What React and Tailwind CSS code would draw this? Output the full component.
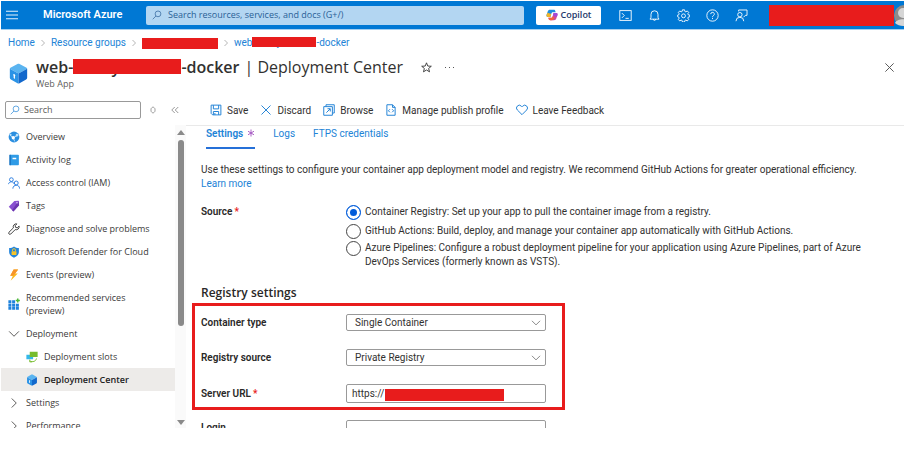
import React from "react";

function Svg({ size = 12, className = "", children, ...rest }) {
  return (
    <svg
      width={size}
      height={size}
      viewBox="0 0 16 16"
      fill="none"
      stroke="currentColor"
      strokeWidth="1.1"
      className={`shrink-0 ${className}`}
      aria-hidden="true"
      {...rest}
    >
      {children}
    </svg>
  );
}

const SearchIcon = (p) => (
  <Svg {...p}>
    <circle cx="9.6" cy="6.2" r="4.6" />
    <path d="M6.3 9.6 1.2 14.8" />
  </Svg>
);

const ChevronRight = (p) => (
  <Svg {...p}>
    <path d="m5 2 6 6-6 6" />
  </Svg>
);

const ChevronDown = (p) => (
  <Svg {...p}>
    <path d="m1.5 4.5 6.5 6.5 6.5-6.5" />
  </Svg>
);

function CubeIcon({ size }) {
  return (
    <Svg size={size} stroke="none">
      <path d="M8 .6c.3 0 .5.1.8.2l5 2.700c.5.3.8.6.8.8L8 8 1.400 4.300c0-.2.3-.5.800-.8l5-2.700c.3-.1.500-.2.800-.2z" fill="#5ab4f0" />
      <path d="M1.400 4.300 8 8v7.600c-.3 0-.5-.1-.8-.2l-5-2.900c-.5-.3-.8-.7-.8-1.200z" fill="#2b93e6" />
      <path d="M14.600 4.300 8 8v7.600c.3 0 .5-.1.8-.2l5-2.900c.5-.3.8-.7.8-1.200z" fill="#1268cc" />
      <path d="M4.600 8.400c.9.400 1.300 1.300.7 1.900v1.800l-1-.6V9.800c-.6-.7-.3-1.500.3-1.400z" fill="#fff" />
    </Svg>
  );
}

function CopilotLogo() {
  return (
    <Svg size={12} stroke="none">
      <path d="M5.3 1h5.2c1 0 1.6.6 1.9 1.6l.5 1.6H9.2c-1 0-1.6.6-1.9 1.6L5.9 10.600H2.300C.9 10.600.3 9.400.7 8L2.300 3.200C2.800 1.700 3.700 1 5.300 1z" fill="#1f8fe0" />
      <path d="M.7 8c-.4 1.400.2 2.600 1.600 2.600h3.600l1.100-3.800L2 5z" fill="#f0b429" />
      <path d="M10.700 15H5.500c-1 0-1.600-.6-1.900-1.600l-.5-1.600h3.700c1 0 1.600-.6 1.900-1.600l1.400-4.800h3.600c1.400 0 2 1.200 1.600 2.600l-1.600 4.800c-.5 1.500-1.400 2.200-3 2.200z" fill="#d1499b" />
      <path d="M10.100 5.400h3.600c1.400 0 2 1.200 1.600 2.600l-.7 2.200-5.500-1.400z" fill="#a04bd8" />
      <path d="M3.100 11.800h3.700c1 0 1.600-.6 1.900-1.600l.3-.9 2.300 3.400-3 2.300h-2.800c-1 0-1.600-.6-1.900-1.600z" fill="#f2653a" />
    </Svg>
  );
}

const headerIcons = [
  {
    label: "Cloud Shell",
    art: (
      <>
        <rect x="1" y="2" width="14" height="12" />
        <path d="m3.500 5 3 3-3 3M8 11.500h4" />
      </>
    ),
  },
  { label: "Notifications", art: <path d="M2.500 12.500h11l-1.200-2.200V6.500a4.300 4.300 0 0 0-8.600 0v3.800zM6.500 12.500a1.500 1.500 0 0 0 3 0" /> },
  {
    label: "Portal settings",
    art: (
      <>
        <path d="M6.700 1h2.600l.4 2 1.200.5 1.700-1.100 1.800 1.800-1.100 1.700.5 1.200 1.900.4v2l-1.900.5-.5 1.200 1.100 1.700-1.800 1.800-1.700-1.100-1.200.5-.4 1.900H6.700l-.4-1.900-1.200-.5-1.700 1.100-1.800-1.800 1.100-1.700-.5-1.200L.8 9.500v-2l1.400-.4.5-1.200-1.100-1.700 1.800-1.800 1.700 1.100L6.300 3z" />
        <circle cx="8" cy="8.400" r="2.400" />
      </>
    ),
  },
  {
    label: "Help",
    art: (
      <>
        <circle cx="8" cy="8" r="7" />
        <path d="M5.800 6.300a2.200 2.200 0 1 1 3.300 1.900c-.8.500-1.100.9-1.100 1.800M8 11v1.400" />
      </>
    ),
  },
  {
    label: "Feedback",
    art: (
      <>
        <circle cx="6" cy="7" r="2.700" />
        <path d="M1.200 15a4.800 4.800 0 0 1 9.600 0M4.500 3V1.200h10.300v6.600h-2l-2.300 2.300" />
      </>
    ),
  },
];

const commands = [
  {
    label: "Save",
    art: (
      <>
        <path d="M1.500 1.500h13v13H3.500l-2-2z" />
        <path d="M4.500 1.500v5h7v-5M4.500 14.500v-4.500h7v4.500M6.500 12v2.500" />
      </>
    ),
  },
  { label: "Discard", art: <path d="m2 2 12 12m0-12-12 12" /> },
  {
    label: "Browse",
    art: (
      <>
        <path d="M4 3.500V1h11v11h-2.500M1 3.500h11.500V15H1z" />
        <path d="m4.500 11.500 5-5M6 6.300h3.700V10" />
      </>
    ),
  },
  {
    label: "Manage publish profile",
    art: (
      <>
        <path d="M2.500 1h7.500l3.500 3.500V15h-11zM10 1v3.500h3.500" />
        <path d="m6.500 7-2 2 2 2m3-4 2 2-2 2" />
      </>
    ),
  },
  { label: "Leave Feedback", art: <path d="M8 14.200 1.800 8A3.700 3.700 0 0 1 7 2.700l1 1 1-1A3.700 3.700 0 0 1 14.200 8z" /> },
];

const menu = [
  {
    label: "Overview",
    art: (
      <>
        <circle cx="8" cy="8" r="7.200" fill="#2b8fe0" stroke="none" />
        <path d="M2.500 5.500 7 9l6.500-3.500M7 9l2 5" stroke="#d5ecfb" />
        <circle cx="7" cy="9" r="2.200" fill="#fff" stroke="none" />
        <circle cx="12" cy="5.500" r="1.700" fill="#bfe3fa" stroke="none" />
        <circle cx="3.500" cy="5" r="1.300" fill="#bfe3fa" stroke="none" />
      </>
    ),
  },
  {
    label: "Activity log",
    art: (
      <>
        <rect x="2" y="1" width="12.500" height="14" rx="1" fill="#2f9be6" stroke="none" />
        <path d="M2 1h1.500v14H2z" fill="#1267b4" stroke="none" />
        <path d="M6 6h5" stroke="#fff" strokeWidth="2" />
      </>
    ),
  },
  {
    label: "Access control (IAM)",
    art: (
      <g stroke="#2f7fe0" strokeWidth="1.300">
        <circle cx="4.500" cy="3.500" r="2.500" />
        <path d="M.7 9.500C1 6 7 5 8 9" />
        <circle cx="11" cy="8" r="2.600" />
        <path d="M6.500 15.500c0-6 9-6 9 0" />
      </g>
    ),
  },
  {
    label: "Tags",
    art: (
      <>
        <path d="M8.500 1.200 14 1l.8 6-7.600 8.200L1 9z" fill="#8850d0" stroke="none" />
        <path d="m14 1 .8 6-7.600 8.200-1.700-1.700z" fill="#6a35ae" stroke="none" />
        <circle cx="12" cy="3.600" r="1" fill="#e9dcfa" stroke="none" />
      </>
    ),
  },
  {
    label: "Diagnose and solve problems",
    art: <path stroke="#333" strokeWidth="1.200" d="M11.800 1.200a4 4 0 0 0-4.600 5.300L1.300 12.300a1.700 1.700 0 0 0 2.400 2.400l5.900-5.900a4 4 0 0 0 5.200-4.700l-2.500 2.300-2.200-.6-.5-2.200z" />,
  },
  {
    label: "Microsoft Defender for Cloud",
    art: (
      <>
        <path d="M8 .5c2 1.500 4 1.900 6.500 2V8c0 4-3.500 6.200-6.500 7.500C5 14.200 1.500 12 1.500 8V2.500C4 2.400 6 2 8 .5z" fill="#2385dc" stroke="none" />
        <rect x="4.700" y="7" width="6.600" height="5" rx=".6" fill="#f6c42c" stroke="none" />
        <path d="M6 7V5.500a2 2 0 0 1 4 0V7" stroke="#f6c42c" strokeWidth="1.300" />
      </>
    ),
  },
  {
    label: "Events (preview)",
    art: (
      <>
        <path d="M7.500.5h6L9.500 6H13L3.500 15.500 6.500 9H3z" fill="#fbb81b" stroke="none" />
        <path d="M7.500.5h6L9.500 6 6.500 9H3z" fill="#f7932a" stroke="none" />
      </>
    ),
  },
  {
    label: "Recommended services (preview)",
    tall: true,
    art: (
      <>
        <path d="M.5 3h4v4h-4zM5.500 3h4v4h-4zM.5 7.600h4v3.600h-4zM5.500 7.600h4v3.600h-4zM10.500 7.600h4v3.600h-4zM.5 11.800h4v3.700h-4zM5.500 11.800h4v3.700h-4zM10.500 11.800h4v3.700h-4z" fill="#1f82dc" stroke="none" />
        <path d="M13 .5v5.500M10.300 3.200h5.500" stroke="#4fb83a" strokeWidth="2" />
      </>
    ),
  },
];

function MenuLink({ label, art, tall }) {
  return (
    <li>
      <a href="#" className={`flex items-center gap-[6px] pl-[8px] ${tall ? "h-[36px] pr-[44px]" : "h-[23px]"}`}>
        <Svg>{art}</Svg>
        <span className={tall ? "leading-[13px]" : "whitespace-nowrap"}>{label}</span>
      </a>
    </li>
  );
}

function MenuGroup({ label, open }) {
  return (
    <button type="button" aria-expanded={!!open} className="flex h-[23px] w-full items-center gap-[6px] pl-[8px]">
      {open ? <ChevronDown size={12} /> : <ChevronRight size={12} />}
      <span>{label}</span>
    </button>
  );
}

function Sidebar() {
  return (
    <aside className="flex min-h-0 w-[186px] shrink-0 font-['Open_Sans','Noto_Sans',sans-serif]">
      <nav aria-label="Resource menu" className="min-w-0 flex-1 overflow-hidden text-[9px] text-[#3b3a39]">
        <ul>
          {menu.map((m) => (
            <MenuLink key={m.label} {...m} />
          ))}
          <li>
            <MenuGroup label="Deployment" open />
            <ul>
              <li>
                <a href="#" className="flex h-[23px] items-center gap-[6px] pl-[26px]">
                  <Svg>
                    <path d="M.5 5h9v6h-9z" fill="#35b8ea" stroke="none" />
                    <path d="M5 1h10.500v7H5z" fill="#76bc2d" stroke="none" />
                    <path d="M14 10c-1 4-5 5-8.500 3.500M5 11.500v3h3" stroke="#76bc2d" strokeWidth="1.300" />
                  </Svg>
                  <span>Deployment slots</span>
                </a>
              </li>
              <li>
                <a href="#" aria-current="page" className="ml-px flex h-[23px] items-center gap-[6px] bg-[#edebe9] pl-[25px] font-semibold text-[#222]">
                  <CubeIcon size={12} />
                  <span>Deployment Center</span>
                </a>
              </li>
            </ul>
          </li>
          <li>
            <MenuGroup label="Settings" />
          </li>
          <li>
            <MenuGroup label="Performance" />
          </li>
        </ul>
      </nav>
      <div className="flex w-[11px] flex-col items-center bg-[#fafafa] pt-[5px] pb-[3px]" aria-hidden="true">
        <div className="border-x-4 border-b-[5px] border-x-transparent border-b-[#8a8a8a]" />
        <div className="mt-[5px] min-h-0 w-[6px] flex-1 rounded-full bg-[#8a8a8a]" />
        <div className="mt-[94px] border-x-4 border-t-[5px] border-x-transparent border-t-[#8a8a8a]" />
      </div>
    </aside>
  );
}

function Header() {
  return (
    <header className="ml-px flex h-[29px] items-center overflow-hidden border-b border-[#a5cff0] bg-[#0078d4] text-white">
      <button type="button" aria-label="Show portal menu" className="ml-[5px]">
        <Svg size={12}>
          <path d="M0 3h16M0 8h16M0 13h16" strokeWidth="1.200" />
        </Svg>
      </button>
      <a href="#" className="ml-[25px] w-[103px] text-[11px] font-semibold whitespace-nowrap">Microsoft Azure</a>
      <label className="flex h-[19px] min-w-0 flex-1 items-center gap-[6px] rounded-[2px] bg-[#b3d6f2] px-[6px] text-[#2a5f96]">
        <SearchIcon size={10} />
        <input
          type="search"
          aria-label="Search resources, services, and docs"
          placeholder="Search resources, services, and docs (G+/)"
          className="min-w-0 flex-1 bg-transparent font-['Open_Sans','Noto_Sans',sans-serif] text-[9px] outline-none placeholder:text-[#2a5f96]"
        />
      </label>
      <button type="button" className="ml-[12px] flex h-[19px] w-[65px] items-center justify-center gap-[3px] rounded-[2px] bg-white font-['Open_Sans','Noto_Sans',sans-serif] text-[9px] font-semibold text-[#24386a]">
        <CopilotLogo />
        Copilot
      </button>
      <div className="ml-[18px] flex gap-[16px]">
        {headerIcons.map((i) => (
          <button key={i.label} type="button" aria-label={i.label}>
            <Svg size={13}>{i.art}</Svg>
          </button>
        ))}
      </div>
      <span className="ml-[21px] h-[21px] w-[125px] shrink-0 bg-[#e81c1c]" />
      <span className="w-[10px] shrink-0 overflow-hidden">
        <svg width="21" height="21" viewBox="0 0 21 21" aria-hidden="true">
          <circle cx="10.500" cy="10.500" r="10.500" fill="#8c8c8c" />
          <circle cx="9" cy="8" r="5" fill="#d6d6d6" />
          <path d="M1 18c2-5 14-5 17 0-4 4-13 4-17 0z" fill="#d6d6d6" />
        </svg>
      </span>
    </header>
  );
}

function Breadcrumb() {
  return (
    <nav aria-label="Breadcrumb" className="flex h-[26px] items-center pl-[8px] text-[10px] leading-[14px] whitespace-nowrap text-[#2283d6]">
      <a href="#">Home</a>
      <ChevronRight size={8} className="mx-[4px] text-[#777]" />
      <a href="#">Resource groups</a>
      <ChevronRight size={8} className="mx-[4px] text-[#777]" />
      <span className="h-[11px] w-[76px] bg-[#e81c1c]" />
      <ChevronRight size={8} className="mx-[4px] text-[#777]" />
      <a href="#" className="flex items-center">
        web
        <span className="relative w-[64px] pl-[24px]">
          y
          <span className="absolute inset-x-0 top-px bottom-[3px] bg-[#e81c1c]" />
        </span>
        -docker
      </a>
    </nav>
  );
}

function TitleBar() {
  return (
    <div className="flex h-[34px] items-center pr-[9px] pl-[8px] font-['Open_Sans','Noto_Sans',sans-serif]">
      <CubeIcon size={21} />
      <div className="ml-[7px]">
        <h1 className="flex items-center text-[16px] leading-[22px] whitespace-nowrap text-[#323130]">
          <span className="font-semibold">web-</span>
          <span className="relative w-[108px] pl-[38px] font-semibold">
            y
            <span className="absolute inset-x-0 top-[3px] bottom-[4px] bg-[#e81c1c]" />
          </span>
          <span className="font-semibold">-docker</span>
          <span className="ml-[5px]">| Deployment Center</span>
        </h1>
        <p className="text-[9px] leading-[12px] text-[#605e5c]">Web App</p>
      </div>
      <button type="button" aria-label="Add to favorites" className="mb-[12px] ml-[18px] text-[#333]">
        <Svg size={11} strokeWidth="1.300">
          <path d="m8 1.200 1.900 4.700 5.100.3-3.900 3.200 1.300 4.900L8 11.600l-4.400 2.700 1.300-4.900L1 6.200l5.100-.3z" />
        </Svg>
      </button>
      <button type="button" aria-label="More" className="mb-[12px] ml-[13px] text-[#555]">
        <svg width="9" height="3" viewBox="0 0 9 3" fill="currentColor" aria-hidden="true">
          <path d="M0 1h1v1H0zM4 1h1v1H4zM8 1h1v1H8z" />
        </svg>
      </button>
      <button type="button" aria-label="Close" className="mb-[12px] ml-auto text-[#555]">
        <Svg size={11} strokeWidth="1.400">
          <path d="m2 2 12 12m0-12-12 12" />
        </Svg>
      </button>
    </div>
  );
}

function CommandRow() {
  return (
    <div className="flex h-[35px] items-center pt-[5px] pl-[5px]">
      <label className="flex h-[18px] w-[136px] items-center gap-[4px] rounded-[2px] border border-[#999] px-[4px]">
        <SearchIcon size={10} className="text-[#2283d6]" />
        <input type="search" aria-label="Search menu" placeholder="Search" className="min-w-0 flex-1 bg-transparent font-['Open_Sans','Noto_Sans',sans-serif] text-[9px] outline-none placeholder:text-[#605e5c]" />
      </label>
      <button type="button" aria-label="Expand all" className="ml-[8px] text-[#888]">
        <Svg size={8} strokeWidth="1.600">
          <path d="m4 5.500 4-4 4 4M4 10.500l4 4 4-4M4 5.500v5M12 5.500v5" />
        </Svg>
      </button>
      <button type="button" aria-label="Collapse menu" className="ml-[14px] text-[#777]">
        <Svg size={8} strokeWidth="1.500">
          <path d="M7.500 2 1.500 8l6 6M14.500 2l-6 6 6 6" />
        </Svg>
      </button>
      <div className="ml-[31px] flex items-center gap-[12px] text-[10px] whitespace-nowrap text-[#323130]">
        {commands.map((c) => (
          <button key={c.label} type="button" className="flex items-center gap-[5px]">
            <Svg size={12} className="text-[#2283d6]" strokeWidth="1.300">{c.art}</Svg>
            {c.label}
          </button>
        ))}
      </div>
    </div>
  );
}

function Tabs() {
  return (
    <div role="tablist" className="flex items-start gap-[18px] pl-[5px] text-[10px] text-[#2283d6]">
      <button type="button" role="tab" aria-selected="true" className="flex h-[23px] items-start gap-[4px] border-b-2 border-[#2570d8] font-semibold">
        Settings
        <Svg size={8} className="mt-[3px] text-[#a04fc0]" strokeWidth="1.800">
          <path d="M8 1v14M2 4.500l12 7M14 4.500l-12 7" />
        </Svg>
      </button>
      <button type="button" role="tab" aria-selected="false">Logs</button>
      <button type="button" role="tab" aria-selected="false">FTPS credentials</button>
    </div>
  );
}

const sources = [
  { id: "registry", text: "Container Registry: Set up your app to pull the container image from a registry.", row: "h-[19px]" },
  { id: "github", text: "GitHub Actions: Build, deploy, and manage your container app automatically with GitHub Actions.", row: "h-[17px]" },
  {
    id: "pipelines",
    text: "Azure Pipelines: Configure a robust deployment pipeline for your application using Azure Pipelines, part of Azure DevOps Services (formerly known as VSTS).",
    row: "",
  },
];

function Required() {
  return <span className="ml-[2px] text-[#e81c1c]">*</span>;
}

const LABEL = "w-[145px] shrink-0 font-semibold text-[#292827]";

function SelectField({ id, label, value }) {
  return (
    <div className="flex h-[17px] items-center">
      <label htmlFor={id} className={LABEL}>{label}</label>
      <div className="relative">
        <select id={id} defaultValue={value} className="block h-[17px] w-[200px] appearance-none rounded-[2px] border border-[#999] bg-white pl-[8px] text-[10px] text-[#323130]">
          <option>{value}</option>
        </select>
        <ChevronDown size={10} className="pointer-events-none absolute top-[4px] right-[5px] text-[#555]" />
      </div>
    </div>
  );
}

function Content() {
  return (
    <main className="min-w-0 flex-1 overflow-hidden border-t border-[#e9e9e9] pr-[30px] pl-[15px] text-[10px] text-[#323130]">
      <Tabs />
      <p className="mt-[14px] leading-[14px]">
        Use these settings to configure your container app deployment model and registry. We recommend GitHub Actions for greater operational efficiency.{" "}
        <a href="#" className="inline-block text-[#2283d6]">Learn more</a>
      </p>
      <fieldset className="mt-[13px] flex">
        <legend className={`float-left ${LABEL}`}>
          Source
          <Required />
        </legend>
        <div className="min-w-0 flex-1 pt-px">
          {sources.map((s, i) => (
            <label key={s.id} className={`flex items-start gap-[4px] leading-[14px] ${s.row}`}>
              <input
                type="radio"
                name="source"
                defaultChecked={i === 0}
                className="size-[15px] shrink-0 appearance-none rounded-full border border-[#444] bg-white checked:border-[#015cda] checked:bg-[#015cda] checked:shadow-[inset_0_0_0_3px_white]"
              />
              <span>{s.text}</span>
            </label>
          ))}
        </div>
      </fieldset>
      <h2 className="mt-[16px] font-['Open_Sans','Noto_Sans',sans-serif] text-[12px] leading-[16px] font-semibold text-[#292827]">Registry settings</h2>
      <div className="mt-[2px] -ml-[9px] flex w-[373px] flex-col gap-[18px] border-[3px] border-[#e81c1c] pt-[8px] pb-[4px] pl-[6px]">
        <SelectField id="container-type" label="Container type" value="Single Container" />
        <SelectField id="registry-source" label="Registry source" value="Private Registry" />
        <div className="flex h-[19px] items-center">
          <label htmlFor="server-url" className={LABEL}>
            Server URL
            <Required />
          </label>
          <div className="relative">
            <input id="server-url" type="text" defaultValue="https://" className="block h-[19px] w-[200px] rounded-[2px] border border-[#999] px-[5px] text-[10px]" />
            <span className="absolute top-[5px] left-[39px] h-[12px] w-[119px] bg-[#e81c1c]" />
          </div>
        </div>
      </div>
      <div className="mt-[10px] flex items-start">
        <label htmlFor="login" className={LABEL}>Login</label>
        <input id="login" type="text" className="block h-[19px] w-[200px] rounded-[2px] border border-[#999] px-[5px] text-[10px]" />
      </div>
    </main>
  );
}

export default function App() {
  return (
    <div className="flex h-screen flex-col overflow-hidden bg-white pt-px pb-[29px] font-[Roboto,'Noto_Sans',sans-serif]">
      <Header />
      <Breadcrumb />
      <TitleBar />
      <CommandRow />
      <div className="flex min-h-0 flex-1">
        <Sidebar />
        <Content />
      </div>
    </div>
  );
}
